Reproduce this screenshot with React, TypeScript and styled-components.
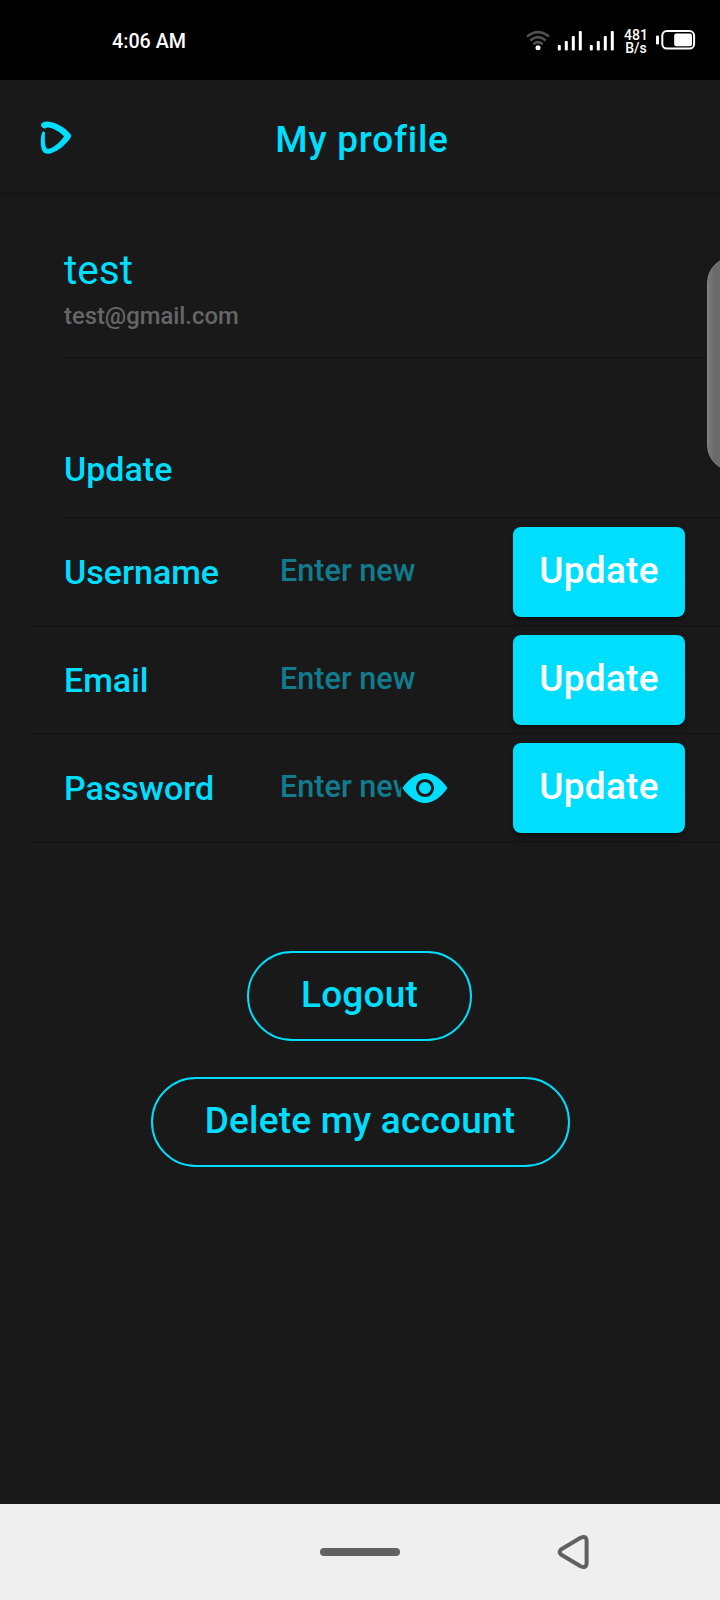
import React from "react";
import styled, { createGlobalStyle } from "styled-components";

const cyan = "#00deff";
const line = "#151515";

const GlobalStyle = createGlobalStyle`
  * { box-sizing: border-box; }
  body { margin: 0; background: #191919; font-family: Roboto, "Liberation Sans", sans-serif; }
  button, input { font-family: inherit; }
`;

const Screen = styled.div`
  position: relative;
  width: 720px;
  height: 1600px;
  display: flex;
  flex-direction: column;
  overflow: hidden;
  background: #191919;
  color: ${cyan};
  font-weight: 500;
`;

const StatusBar = styled.div`
  height: 80px;
  display: flex;
  align-items: center;
  justify-content: space-between;
  padding: 0 24px 0 112px;
  background: #000;
  color: #fff;
`;

const Clock = styled.span`
  font-size: 19.7px;
  line-height: 24px;
  padding-top: 4px;
`;

const StatusIcons = styled.div`
  display: flex;
  align-items: center;
  height: 28px;
`;

const NetSpeed = styled.div`
  width: 26px;
  margin: 3px 7px 0 9px;
  font-size: 14px;
  line-height: 13px;
  text-align: center;
`;

const Header = styled.header`
  height: 112px;
  display: grid;
  grid-template-columns: 80px 1fr 80px;
  align-items: center;
  box-shadow: 0 2px 0 #151515, 0 5px 0 #161616, 0 8px 0 #181818;
`;

const BackButton = styled.button`
  display: flex;
  padding: 3px 0 0 40px;
  border: 0;
  background: none;
`;

const Title = styled.h1`
  margin: 8px 0 0 4px;
  text-align: center;
  font-size: 37px;
  font-weight: 500;
  line-height: 44px;
  letter-spacing: 0.75px;
`;

const Profile = styled.section`
  height: 167px;
  margin-left: 64px;
  padding-top: 54px;
  border-bottom: 2px solid ${line};
`;

const Name = styled.div`
  font-size: 40.5px;
  font-weight: 400;
  line-height: 48px;
`;

const Mail = styled.div`
  padding-top: 8px;
  font-size: 23.8px;
  line-height: 28px;
  color: #666;
`;

const SectionTitle = styled.h2`
  height: 160px;
  margin: 0 0 0 64px;
  padding-top: 90px;
  border-bottom: 2px solid ${line};
  font-size: 34px;
  font-weight: 500;
  line-height: 40px;
`;

const Row = styled.div`
  display: flex;
  align-items: center;
  height: 108px;
  margin-left: 32px;
  padding: 0 35px 0 32px;
  border-bottom: 2px solid ${line};
`;

const Label = styled.label`
  width: 216px;
  font-size: 34px;
  line-height: 40px;
`;

const Field = styled.input<{ $short?: boolean }>`
  width: ${(p) => (p.$short ? 121 : 180)}px;
  height: 60px;
  padding: 0 0 3px;
  border: 0;
  outline: 0;
  background: none;
  color: ${cyan};
  font-size: 30.6px;
  font-weight: 500;
  &::placeholder { color: #107c8d; opacity: 1; }
`;

const EyeButton = styled.button`
  display: flex;
  margin-left: 1px;
  padding: 0;
  border: 0;
  background: none;
`;

const UpdateButton = styled.button`
  width: 172px;
  height: 90px;
  margin-left: auto;
  padding: 0 0 3px;
  border: 0;
  border-radius: 8px;
  background: ${cyan};
  color: #fff;
  font-size: 37px;
  font-weight: 500;
  letter-spacing: 0.25px;
  box-shadow: 0 3px 5px rgba(0, 0, 0, 0.4);
`;

const Actions = styled.section`
  flex: 1;
  display: flex;
  flex-direction: column;
  align-items: center;
  gap: 36px;
  padding-top: 108px;
`;

const PillButton = styled.button<{ $width: number }>`
  width: ${(p) => p.$width}px;
  height: 90px;
  padding: 0 0 3px;
  border: 2px solid ${cyan};
  border-radius: 45px;
  background: none;
  color: ${cyan};
  font-size: 37px;
  font-weight: 500;
  letter-spacing: 0.2px;
  &:first-child { margin-right: 1px; }
`;

const NavBar = styled.nav`
  height: 96px;
  display: grid;
  grid-template-columns: 1fr 80px 1fr;
  align-items: center;
  background: #efefef;
`;

const HomePill = styled.div`
  grid-column: 2;
  height: 8px;
  border-radius: 4px;
  background: #616161;
`;

const NavBack = styled.div`
  display: flex;
  padding-left: 156px;
`;

const EdgeHandle = styled.div`
  position: absolute;
  top: 257px;
  left: 707px;
  width: 52px;
  height: 214px;
  border: 1px solid #858585;
  border-radius: 26px;
  background: linear-gradient(to right, #7c7c7c 0, #6a6a6a 6px, #6a6a6a 100%);
`;

const Wifi = () => (
  <svg width="24" height="21" viewBox="0 -1 24 21" fill="none" stroke="#505050" strokeWidth="2.6">
    <path d="M1 5.6Q12-3.4 23 5.6" />
    <path d="M4.2 9.4Q12 3 19.8 9.4" />
    <path d="M7.4 13.2Q12 9.2 16.6 13.2" />
    <circle cx="12" cy="16.8" r="2.5" fill="#fff" stroke="none" />
  </svg>
);

const SignalIcon = styled.svg`
  margin-left: 7px;
`;

const Signal = () => (
  <SignalIcon width="25" height="21" viewBox="-0.3 -1 25 21" fill="#fff">
    <rect x="0.5" y="14" width="3" height="5.5" rx="1" />
    <rect x="7.5" y="10" width="3" height="9.5" rx="1" />
    <rect x="14.5" y="5" width="3" height="14.5" rx="1" />
    <rect x="21.5" y="0" width="3" height="19.5" rx="1" />
  </SignalIcon>
);

const Battery = () => (
  <svg width="40" height="20" viewBox="0 0 40 20">
    <rect x="0" y="5.5" width="3" height="9" rx="1.3" fill="#fff" />
    <rect x="6.3" y="1.1" width="31.8" height="17.4" rx="4.5" fill="none" stroke="#fff" strokeWidth="2" />
    <rect x="18.2" y="3.6" width="17.8" height="12.6" rx="2" fill="#fff" />
  </svg>
);

const Eye = () => (
  <svg width="46" height="30" viewBox="0 0 46 30">
    <path d="M0.5 15C6 7 14 0 23 0S40 7 45.5 15C40 23 32 30 23 30S6 23 0.5 15Z" fill={cyan} />
    <circle cx="23" cy="15" r="7.6" fill={cyan} stroke="#191919" strokeWidth="3" />
  </svg>
);

const rows = [
  { label: "Username", secret: false },
  { label: "Email", secret: false },
  { label: "Password", secret: true },
];

export default function App() {
  return (
    <>
      <GlobalStyle />
      <Screen>
        <StatusBar>
          <Clock>4:06 AM</Clock>
          <StatusIcons>
            <Wifi />
            <Signal />
            <Signal />
            <NetSpeed>481 B/s</NetSpeed>
            <Battery />
          </StatusIcons>
        </StatusBar>
        <Header>
          <BackButton aria-label="Back">
            <svg width="32" height="34" viewBox="0 0 32 34" fill={cyan}>
              <path d="M1 3.8C1.6 1.2 4 0.3 7.5 0.4C16 1 25.5 6.6 30.6 13.2Q31.8 15 30.4 17C26 23.5 18.5 30 10.5 32.4C5.8 33.6 2.7 31.7 1.4 27.2C0.3 22 0.6 16 2 11.5Q3.7 9.5 5 11.8C4.8 16 4.6 21.5 5.7 25.4C6.5 28 8 28.3 10.3 27.3C15 25.4 21 20.2 24 15.4C20.5 11 13 6.8 7.4 6.2C5.8 7.8 3.6 7.6 2.3 6.6Q0.9 5.4 1 3.8Z" />
            </svg>
          </BackButton>
          <Title>My profile</Title>
        </Header>
        <Profile>
          <Name>test</Name>
          <Mail>test@gmail.com</Mail>
        </Profile>
        <SectionTitle>Update</SectionTitle>
        {rows.map((r) => (
          <Row key={r.label}>
            <Label htmlFor={r.label}>{r.label}</Label>
            <Field id={r.label} $short={r.secret} placeholder="Enter new" />
            {r.secret && (
              <EyeButton aria-label="Show password">
                <Eye />
              </EyeButton>
            )}
            <UpdateButton>Update</UpdateButton>
          </Row>
        ))}
        <Actions>
          <PillButton $width={225}>Logout</PillButton>
          <PillButton $width={419}>Delete my account</PillButton>
        </Actions>
        <NavBar>
          <HomePill />
          <NavBack>
            <svg width="34" height="36" viewBox="-0.6 0 34 36" fill="none" stroke="#616161" strokeWidth="4" strokeLinejoin="round">
              <path d="M4.3 15.5L24 3.8Q30 1 30 7.2V28.8Q30 35 24 32.2L4.3 20.5Q2 18 4.3 15.5Z" />
            </svg>
          </NavBack>
        </NavBar>
        <EdgeHandle />
      </Screen>
    </>
  );
}
